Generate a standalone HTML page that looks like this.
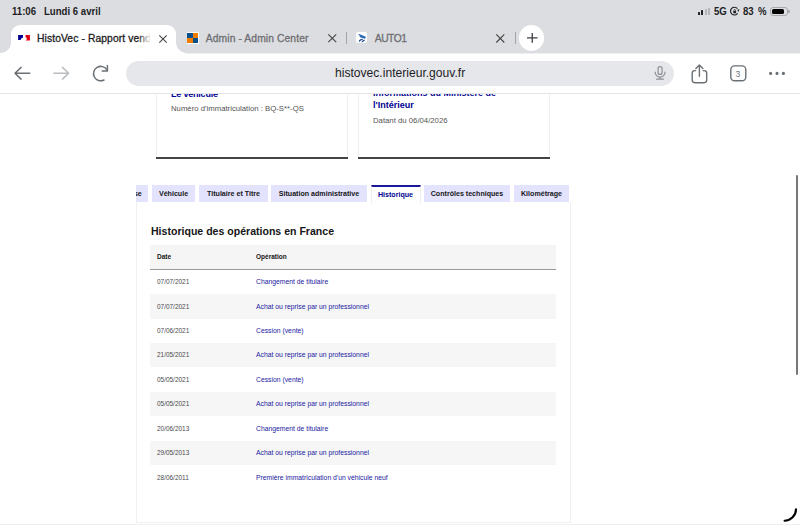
<!DOCTYPE html>
<html><head><meta charset="utf-8">
<style>
*{margin:0;padding:0;box-sizing:border-box}
html,body{width:800px;height:525px;overflow:hidden;background:#fff;font-family:"Liberation Sans",sans-serif}
.a{position:absolute;white-space:nowrap}
#page{position:absolute;left:0;top:0;width:800px;height:525px}
#chrome{position:absolute;left:0;top:0;width:800px;height:94px}
#bar{position:absolute;left:0;top:0;width:800px;height:53px;background:#dcdde1}
.st{font-size:10.5px;font-weight:bold;color:#1d1d1f;top:5px;line-height:12px;transform:scaleX(0.915);transform-origin:0 0}
#acttab{position:absolute;left:11px;top:25px;width:165px;height:30px;background:#fff;border-radius:9px 9px 0 0}
.flL{position:absolute;left:1px;top:43px;width:10px;height:10px;background:radial-gradient(circle at 0 0,#dcdde1 9.5px,#fff 10px)}
.flR{position:absolute;left:176px;top:43px;width:10px;height:10px;background:radial-gradient(circle at 100% 0,#dcdde1 9.5px,#fff 10px)}
.tt{font-size:10.3px;top:32.8px;line-height:12px;color:#1d1d1f;-webkit-text-stroke:0.3px currentColor;letter-spacing:0.1px}
#tool{position:absolute;left:0;top:53px;width:800px;height:41px;background:#fff;border-bottom:1px solid #e4e4e7}
#url{position:absolute;left:126px;top:61px;width:547.5px;height:25px;border-radius:12.5px;background:#e6e7eb}
svg{position:absolute;overflow:visible}
.card{position:absolute;top:70px;height:89px;border-left:1px solid #eeeeee;border-right:1px solid #eeeeee; background:#fff}
.card::after{content:"";position:absolute;left:-1px;right:-1px;bottom:0;height:2px;background:#444}
.ctitle{color:#000091;font-weight:bold;font-size:9px;line-height:12.5px}
.csub{color:#555;font-size:7.75px;line-height:9px}
.tab{position:absolute;top:185px;height:17px;background:#e3e3fd;color:#161616;font-weight:bold;font-size:7.1px;line-height:19.4px;text-align:center;overflow:hidden}
#panel{position:absolute;left:136px;top:202px;width:435px;height:320.5px;border:1px solid #f0f0f0;border-top:none}
.row{position:absolute;left:150px;width:406px;height:24.45px}
.row.s{background:#f6f6f6}
.d{position:absolute;left:7px;top:0.4px;line-height:24.45px;font-size:6.45px;color:#4a4a4a}
.o{position:absolute;left:106px;top:0.4px;line-height:24.45px;font-size:6.8px;color:#1a1aa0}
</style></head><body>
<div id="page">
<div class="card" style="left:156px;width:192px">
  <div class="a ctitle" style="left:14px;top:18px;letter-spacing:-0.2px">Le véhicule</div>
  <div class="a csub" style="left:14px;top:34px">Numéro d'immatriculation : BQ-S**-QS</div>
</div>
<div class="card" style="left:358px;width:192px">
  <div class="a ctitle" style="left:14px;top:16.6px">Informations du Ministère de<br>l'Intérieur</div>
  <div class="a csub" style="left:14px;top:45.7px">Datant du 06/04/2026</div>
</div>

<div class="tab" style="left:136px;width:12.2px;text-align:left"><span style="position:absolute;right:6.4px;top:0">se</span></div>
<div class="tab" style="left:152px;width:43px">Véhicule</div>
<div class="tab" style="left:199px;width:69px">Titulaire et Titre</div>
<div class="tab" style="left:271px;width:96px">Situation administrative</div>
<div class="tab" style="left:370.5px;width:50px;background:#fff;color:#000091;border-top:2px solid #1a1a9a;border-left:1px solid #eee;border-right:1px solid #eee;height:18px;top:184.5px;line-height:16.8px">Historique</div>
<div class="tab" style="left:424px;width:86px">Contrôles techniques</div>
<div class="tab" style="left:514px;width:55px">Kilométrage</div>
<div id="panel"></div>

<div class="a" style="left:151px;top:224.8px;font-size:11.5px;font-weight:bold;color:#161616;transform:scaleX(0.918);transform-origin:0 0">Historique des opérations en France</div>
<div class="a" style="left:150px;top:244.7px;width:406px;height:25px;background:#f5f5f5;border-bottom:1px solid #9a9a9a"></div>
<div class="a" style="left:157px;top:253px;font-size:6.5px;font-weight:bold;color:#161616">Date</div>
<div class="a" style="left:256px;top:253px;font-size:6.5px;font-weight:bold;color:#161616">Opération</div>

<div class="row" style="top:269.7px"><span class="d">07/07/2021</span><span class="o">Changement de titulaire</span></div>
<div class="row s" style="top:294.15px"><span class="d">07/07/2021</span><span class="o">Achat ou reprise par un professionnel</span></div>
<div class="row" style="top:318.6px"><span class="d">07/06/2021</span><span class="o">Cession (vente)</span></div>
<div class="row s" style="top:343.05px"><span class="d">21/05/2021</span><span class="o">Achat ou reprise par un professionnel</span></div>
<div class="row" style="top:367.5px"><span class="d">05/05/2021</span><span class="o">Cession (vente)</span></div>
<div class="row s" style="top:391.95px"><span class="d">05/05/2021</span><span class="o">Achat ou reprise par un professionnel</span></div>
<div class="row" style="top:416.4px"><span class="d">20/06/2013</span><span class="o">Changement de titulaire</span></div>
<div class="row s" style="top:440.85px"><span class="d">29/05/2013</span><span class="o">Achat ou reprise par un professionnel</span></div>
<div class="row" style="top:465.3px"><span class="d">28/06/2011</span><span class="o">Première immatriculation d'un véhicule neuf</span></div>

<div class="a" style="left:0;top:524px;width:800px;height:1px;background:#eeeeee"></div>
<div class="a" style="left:795.6px;top:175px;width:2.6px;height:199.5px;background:#777;border-radius:1.3px"></div>
<svg style="left:0;top:0" width="800" height="525"><path d="M796 509.3 A11.5 11.5 0 0 1 784.6 520.7" fill="none" stroke="#000" stroke-width="2.1" stroke-linecap="round"/></svg>
</div>

<div id="chrome">
<div id="bar"></div>
<div class="a st" style="left:11.5px">11:06</div>
<div class="a st" style="left:43.8px">Lundi 6 avril</div>
<!-- signal -->
<div class="a" style="left:697.6px;top:11.6px;width:2px;height:3px;background:#1d1d1f;border-radius:.5px"></div>
<div class="a" style="left:701px;top:10.2px;width:2px;height:4.4px;background:#1d1d1f;border-radius:.5px"></div>
<div class="a" style="left:704.6px;top:8.9px;width:2px;height:5.7px;background:#b4b5b9;border-radius:.5px"></div>
<div class="a" style="left:708.2px;top:7.5px;width:2px;height:7.1px;background:#b4b5b9;border-radius:.5px"></div>
<div class="a st" style="left:714px">5G</div>
<svg style="left:0;top:0" width="800" height="20"><path d="M737.6 13.4 A3.9 3.9 0 1 1 737.4 8.6" fill="none" stroke="#1d1d1f" stroke-width="1.15"/><path d="M737.3 9.6 L739.5 9.6 L738.4 12 Z" fill="#1d1d1f"/><rect x="733.3" y="11" width="2.8" height="2.3" rx=".4" fill="#1d1d1f"/><path d="M733.9 11.2 V10.3 A0.8 0.8 0 0 1 735.5 10.3 V11.2" fill="none" stroke="#1d1d1f" stroke-width=".7"/></svg>
<div class="a st" style="left:742.7px">83</div><div class="a st" style="left:757.6px">%</div>
<div class="a" style="left:770.2px;top:6.9px;width:17.8px;height:8.8px;border:1px solid #a9aaae;border-radius:3px"></div>
<div class="a" style="left:771.8px;top:8.5px;width:12.4px;height:5.6px;background:#000;border-radius:1.5px"></div>
<div class="a" style="left:788.4px;top:9.6px;width:1.3px;height:3.4px;background:#a9aaae;border-radius:0 1px 1px 0"></div>

<div id="acttab"></div>
<div class="flL"></div><div class="flR"></div>
<svg style="left:0;top:0" width="40" height="50"><path d="M18.1 34.9 H23 V37.6 L21.2 38.4 L20.6 40 H18.1 Z" fill="#000091"/><path d="M25.6 34.9 H29.9 V40.6 H25.3 L26.8 39.4 L26.6 37.8 L25.5 37.2 Z" fill="#e1000f"/></svg>
<div class="a tt" style="left:37px">HistoVec - Rapport vend</div>
<div class="a" style="left:138px;top:30px;width:16px;height:16px;background:linear-gradient(90deg,rgba(255,255,255,0),#fff 80%)"></div>
<svg style="left:159px;top:34.5px" width="8" height="8"><path d="M0.3 0.3 L7.7 7.7 M7.7 0.3 L0.3 7.7" stroke="#444" stroke-width="1.1"/></svg>

<div class="a" style="left:186.9px;top:32px;width:11.8px;height:11.8px;background:#fff"></div>
<div class="a" style="left:187.4px;top:32.5px;width:5.4px;height:5.4px;background:#0b4f8a"></div>
<div class="a" style="left:192.8px;top:32.5px;width:5.4px;height:5.4px;background:#f07d00"></div>
<div class="a" style="left:187.4px;top:37.9px;width:5.4px;height:5.4px;background:#f07d00"></div>
<div class="a" style="left:192.8px;top:37.9px;width:5.4px;height:5.4px;background:#0b4f8a"></div>
<div class="a tt" style="left:205.8px;color:#6e6f73">Admin - Admin Center</div>
<svg style="left:327.8px;top:34px" width="8.5" height="8.5"><path d="M0.3 0.3 L8.2 8.2 M8.2 0.3 L0.3 8.2" stroke="#444" stroke-width="1.1"/></svg>
<div class="a" style="left:346.2px;top:32.2px;width:1px;height:11.5px;background:#a3a4a8"></div>

<div class="a" style="left:356px;top:32.3px;width:11px;height:10.8px;background:#fff;border-radius:2px"></div>
<svg style="left:0;top:0" width="400" height="50"><path d="M357.9 34 L359.8 34.3 L365.9 36.7 L365.2 38.7 L360.6 37.6 L359.8 36.8 L359.3 35.3 Z" fill="#2c69b3"/><path d="M358.6 41.6 Q359.5 38.6 363.2 38.9 L362.2 40 Q360.6 40.2 359.8 41.8 Z" fill="#1f4f8e"/><path d="M361.3 42.2 Q362.4 39.8 365.1 39.6 L364.4 41 Q363.4 41.2 362.4 42.3 Z" fill="#1f4f8e"/></svg>
<div class="a tt" style="left:374.8px;color:#6e6f73;letter-spacing:-0.5px">AUTO1</div>
<svg style="left:496.4px;top:33.6px" width="8.6" height="8.8"><path d="M0.3 0.3 L8.3 8.5 M8.3 0.3 L0.3 8.5" stroke="#444" stroke-width="1.1"/></svg>
<div class="a" style="left:515px;top:32.1px;width:1px;height:11.6px;background:#a3a4a8"></div>
<div class="a" style="left:518.9px;top:25.4px;width:25.4px;height:25.4px;background:#fff;border-radius:50%"></div>
<svg style="left:526.7px;top:32.9px" width="10.5" height="10" viewBox="0 0 10.5 10"><path d="M0 4.85 H10.5 M5.25 0 V9.7" stroke="#3c3c43" stroke-width="1.3"/></svg>

<div id="tool"></div>
<div class="a" style="left:186px;top:53px;width:614px;height:1px;background:#eeeff1"></div>
<div id="url"></div>
<div class="a" style="left:335px;top:66.3px;font-size:12.1px;line-height:14px;color:#1d1d1f">histovec.interieur.gouv.fr</div>

<svg style="left:0;top:53px" width="800" height="40" viewBox="0 53 800 40">
 <g fill="none" stroke-linecap="round" stroke-linejoin="round">
  <path d="M29.7 73.3 H15 M21.1 67.4 L15 73.3 L21.1 79.1" stroke="#6b7075" stroke-width="1.5"/>
  <path d="M54 73.3 H68.6 M62.5 67.4 L68.6 73.3 L62.5 79.1" stroke="#b9bcc0" stroke-width="1.5"/>
  <path d="M104 80 A7.2 7.2 0 1 1 106.9 69.9" stroke="#6b7075" stroke-width="1.5"/>
  <path d="M107.4 65.5 V71.1 H102.2" stroke="#6b7075" stroke-width="1.5"/>
  <rect x="658.1" y="66.6" width="4" height="7.8" rx="2" stroke="#8b8f94" stroke-width="1.2"/>
  <path d="M655.2 72.2 A4.9 4.9 0 0 0 665 72.2 M660.1 77.3 V79.2 M656.6 79.2 H663.4" stroke="#8b8f94" stroke-width="1.2"/>
  <path d="M695.6 70.6 H694.8 A2.6 2.6 0 0 0 692.2 73.2 V80.1 A2.6 2.6 0 0 0 694.8 82.7 H704.1 A2.6 2.6 0 0 0 706.7 80.1 V73.2 A2.6 2.6 0 0 0 704.1 70.6 H703.2" stroke="#6b7075" stroke-width="1.4"/>
  <path d="M699.4 76.2 V65 M695.9 68.4 L699.4 64.9 L702.9 68.4" stroke="#6b7075" stroke-width="1.4"/>
  <rect x="730.8" y="65.9" width="15" height="14.9" rx="3.8" stroke="#6b7075" stroke-width="1.4"/>
 </g>
 <circle cx="770.6" cy="73.4" r="1.55" fill="#6b7075"/>
 <circle cx="777" cy="73.4" r="1.55" fill="#6b7075"/>
 <circle cx="783.4" cy="73.4" r="1.55" fill="#6b7075"/>
</svg>
<div class="a" style="left:735.5px;top:68.5px;font-size:8.5px;line-height:10px;color:#6b7075">3</div>
</div>
</body></html>
